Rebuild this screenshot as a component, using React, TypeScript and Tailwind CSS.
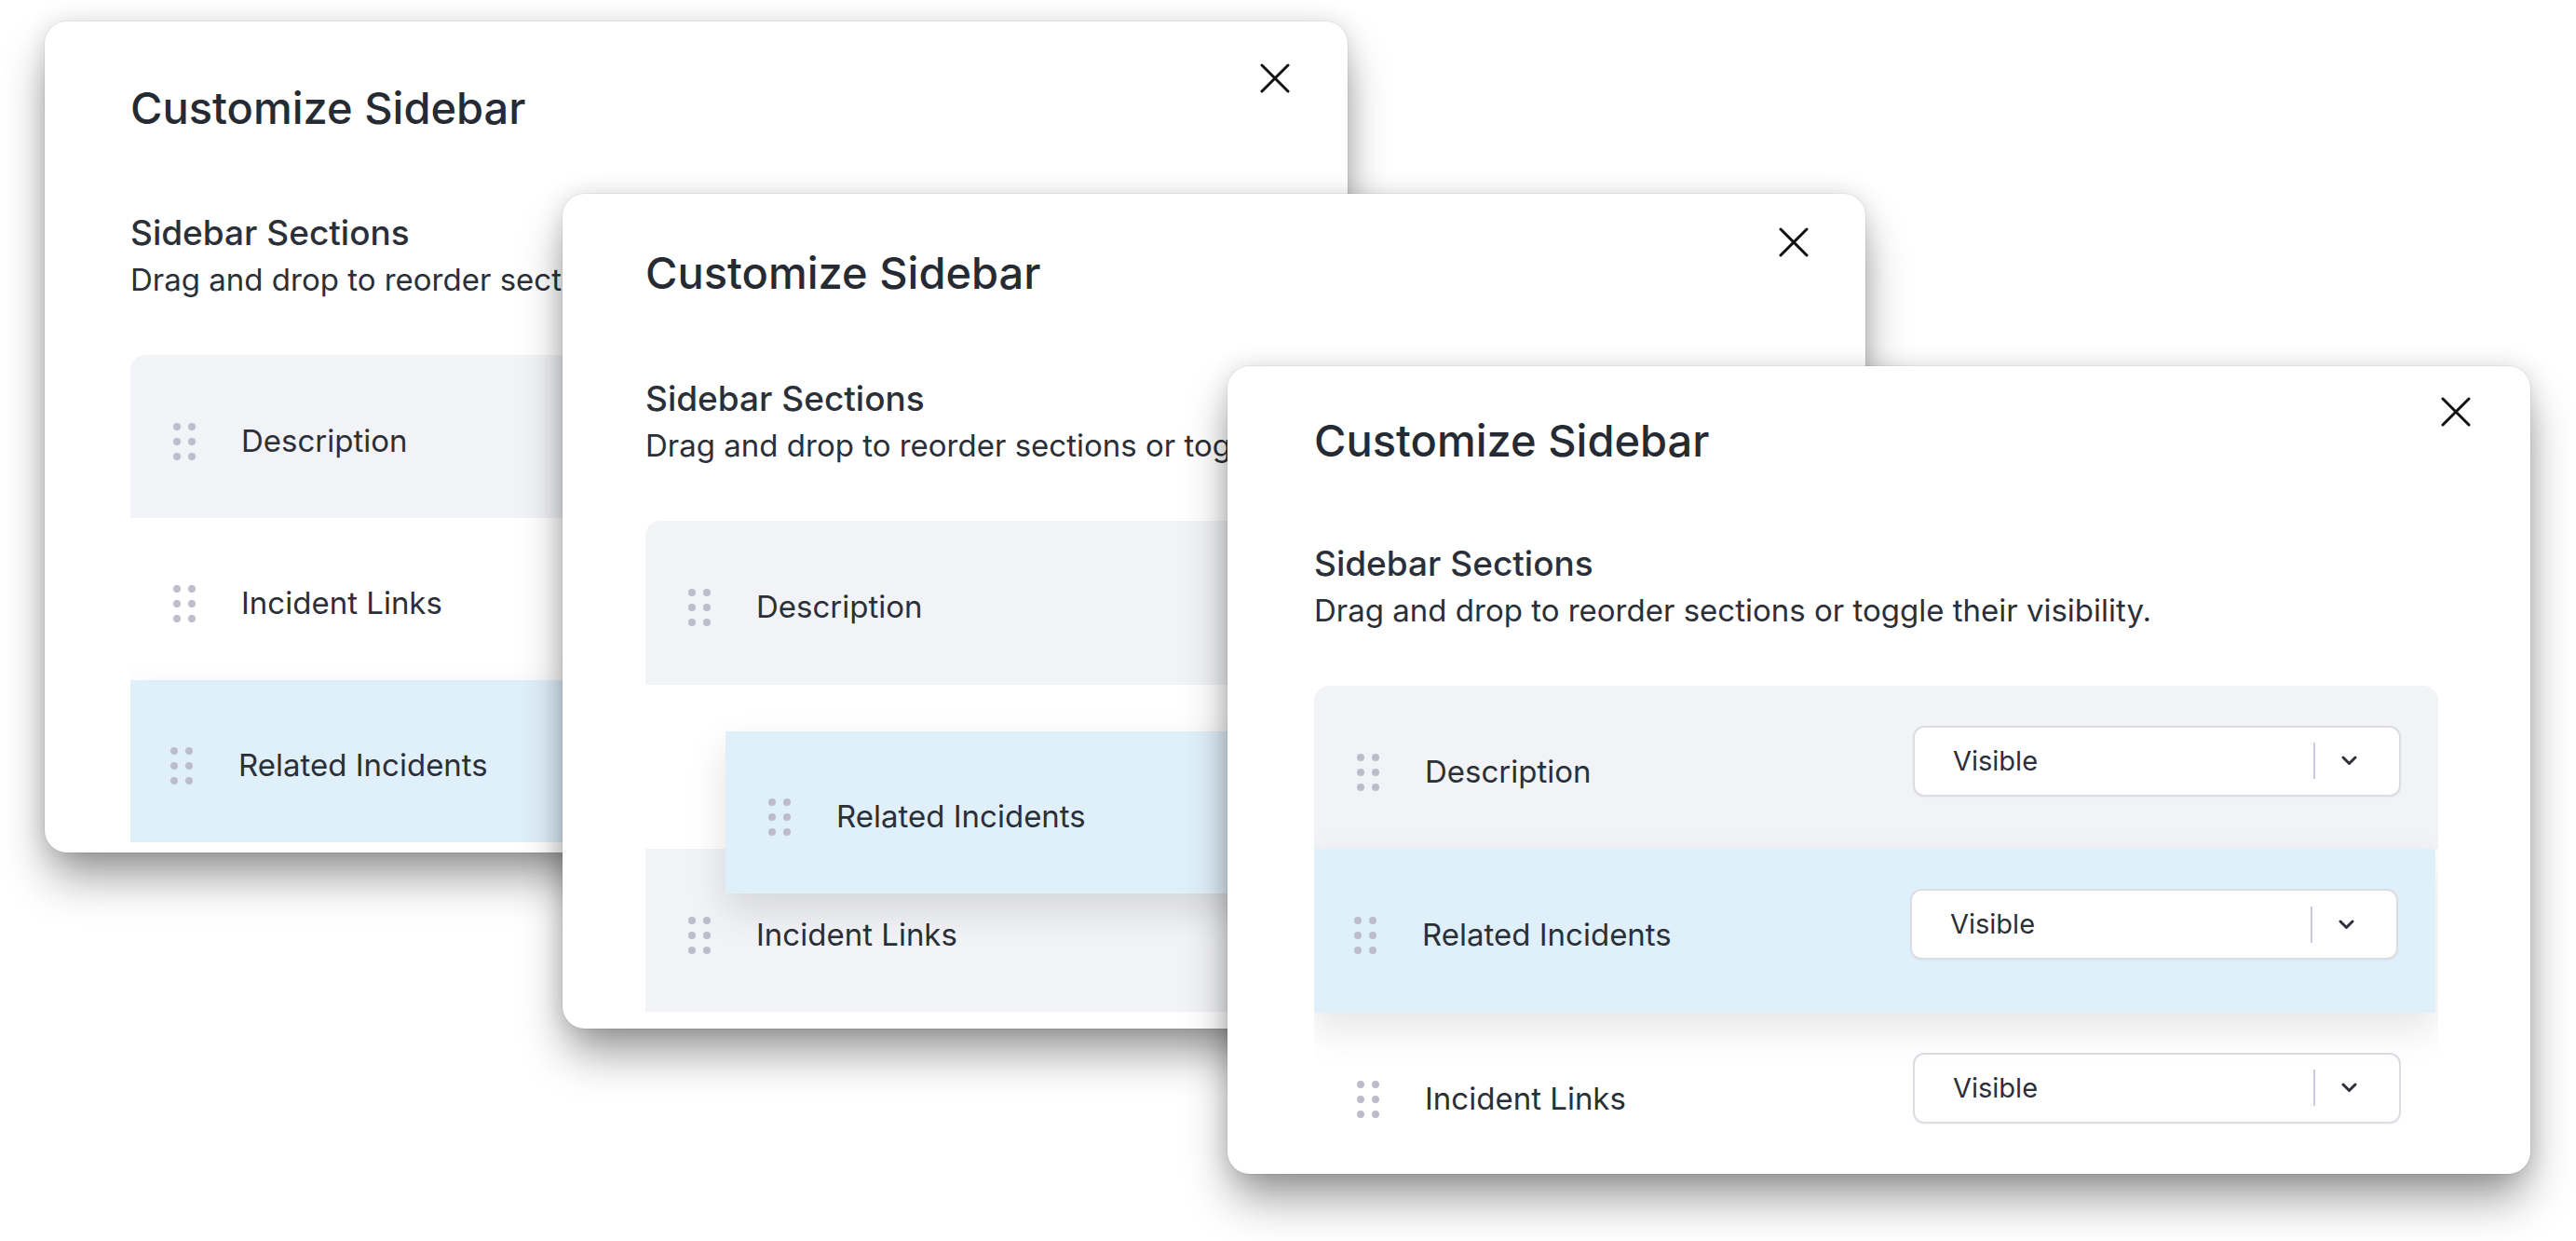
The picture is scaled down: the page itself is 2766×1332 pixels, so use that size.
import React from "react";

type Tone = "gray" | "white" | "blue" | "gap";

type Row = {
  label: string;
  tone: Tone;
  h: string;
};

type CardSpec = {
  pos: string;
  pad: string;
  ssGap: string;
  close: string;
  rows: Row[];
  dragged?: Row;
};

const toneClass: Record<Tone, string> = {
  gray: "bg-[#f2f3f7]",
  white: "bg-white",
  blue: "bg-[#e0f0fb] -translate-x-[3px] shadow-[0_18px_40px_rgba(0,0,0,0.10)] relative z-10",
  gap: "bg-white",
};

const CARDS: CardSpec[] = [
  {
    pos: "left-[48px] top-[23px] h-[892px] z-10",
    pad: "pt-[65px] pl-[92px]",
    ssGap: "mt-[84px]",
    close: "top-[45px] right-[62px]",
    rows: [
      { label: "Description", tone: "gray", h: "h-[175px]" },
      { label: "Incident Links", tone: "white", h: "h-[174px]" },
      { label: "Related Incidents", tone: "blue", h: "h-[174px]" },
    ],
  },
  {
    pos: "left-[604px] top-[208px] h-[896px] z-20",
    pad: "pt-[57px] pl-[89px]",
    ssGap: "mt-[85px]",
    close: "top-[36px] right-[61px]",
    rows: [
      { label: "Description", tone: "gray", h: "h-[176px]" },
      { label: "", tone: "gap", h: "h-[176px]" },
      { label: "Incident Links", tone: "gray", h: "h-[175px]" },
    ],
    dragged: { label: "Related Incidents", tone: "blue", h: "h-[174px]" },
  },
  {
    pos: "left-[1318px] top-[393px] h-[867px] z-30",
    pad: "pt-[52px] pl-[93px]",
    ssGap: "mt-[82px]",
    close: "top-[33px] right-[64px]",
    rows: [
      { label: "Description", tone: "gray", h: "h-[175px]" },
      { label: "Related Incidents", tone: "blue", h: "h-[176px]" },
      { label: "Incident Links", tone: "white", h: "h-[175px]" },
    ],
  },
];

const DragHandle = () => (
  <div className="grid grid-cols-2 gap-[8px] w-[24px] shrink-0">
    {Array.from({ length: 6 }).map((_, i) => (
      <span key={i} className="block w-[8px] h-[8px] rounded-full bg-[#bcbccd]" />
    ))}
  </div>
);

const CloseIcon = () => (
  <svg width="32" height="32" viewBox="0 0 32 32" fill="none">
    <path d="M2 2L30 30M30 2L2 30" stroke="#111" strokeWidth="3" strokeLinecap="round" />
  </svg>
);

const Chevron = () => (
  <svg width="17" height="11" viewBox="0 0 17 11" fill="none">
    <path d="M2 2L8.5 8.5L15 2" stroke="#2d3038" strokeWidth="3" strokeLinecap="round" strokeLinejoin="round" />
  </svg>
);

const VisibilitySelect = () => (
  <div className="flex items-center w-[524px] h-[76px] mb-[14px] rounded-[12px] border-2 border-[#dcdde3] bg-white shadow-[0_1px_2px_rgba(0,0,0,0.04)]">
    <span className="flex-1 pl-[41px] text-[29px] text-[#2b2f38]">Visible</span>
    <span className="w-[2px] h-[39px] bg-[#c9cbdf]" />
    <span className="flex items-center pl-[28px] pr-[45px]">
      <Chevron />
    </span>
  </div>
);

function rowClass(row: Row) {
  return `${row.h} w-full ${toneClass[row.tone]}`;
}

const RowContent = ({ label }: { label: string }) => (
  <>
    <div className="flex items-center gap-[49px] mt-[10px]">
      <DragHandle />
      <span className="text-[33px] text-[#2b2f38] whitespace-nowrap">{label}</span>
    </div>
    <VisibilitySelect />
  </>
);

const SectionRow = ({ row }: { row: Row }) => {
  if (row.tone === "gap") return <div className={rowClass(row)} />;
  return (
    <div className={rowClass(row) + " flex items-center justify-between pl-[46px] pr-[40px]"}>
      <RowContent label={row.label} />
    </div>
  );
};

const SidebarCard = ({ spec }: { spec: CardSpec }) => (
  <div
    className={`absolute ${spec.pos} w-[1399px] overflow-hidden rounded-[24px] bg-white ring-1 ring-black/5 shadow-[0_30px_50px_-6px_rgba(0,0,0,0.42),0_0_26px_rgba(0,0,0,0.12)] ${spec.pad} pr-[99px]`}
  >
    <button className={`absolute ${spec.close} w-[32px] h-[32px]`}>
      <CloseIcon />
    </button>
    <h2 className="text-[47px] leading-[56px] font-medium text-[#262a33]">Customize Sidebar</h2>
    <h3 className={`${spec.ssGap} text-[37px] leading-[44px] font-medium text-[#2b2f38]`}>Sidebar Sections</h3>
    <p className="mt-[8px] text-[33px] leading-[40px] text-[#2b2f38] whitespace-nowrap">
      Drag and drop to reorder sections or toggle their visibility.
    </p>
    <div className="relative mt-[61px]">
      <div className="overflow-hidden rounded-t-[16px]">
        {spec.rows.map((row, i) => (
          <SectionRow key={i} row={row} />
        ))}
      </div>
      {spec.dragged && (
        <div
          className={`absolute left-[86px] top-[226px] z-20 w-full ${spec.dragged.h} bg-[#e0f0fb] shadow-[0_18px_40px_rgba(0,0,0,0.12)] flex items-center justify-between pl-[46px] pr-[40px]`}
        >
          <RowContent label={spec.dragged.label} />
        </div>
      )}
    </div>
  </div>
);

export default function App() {
  return (
    <div className="relative w-[2766px] h-[1332px] overflow-hidden bg-white font-['Inter',sans-serif] antialiased">
      {CARDS.map((spec, i) => (
        <SidebarCard key={i} spec={spec} />
      ))}
    </div>
  );
}
